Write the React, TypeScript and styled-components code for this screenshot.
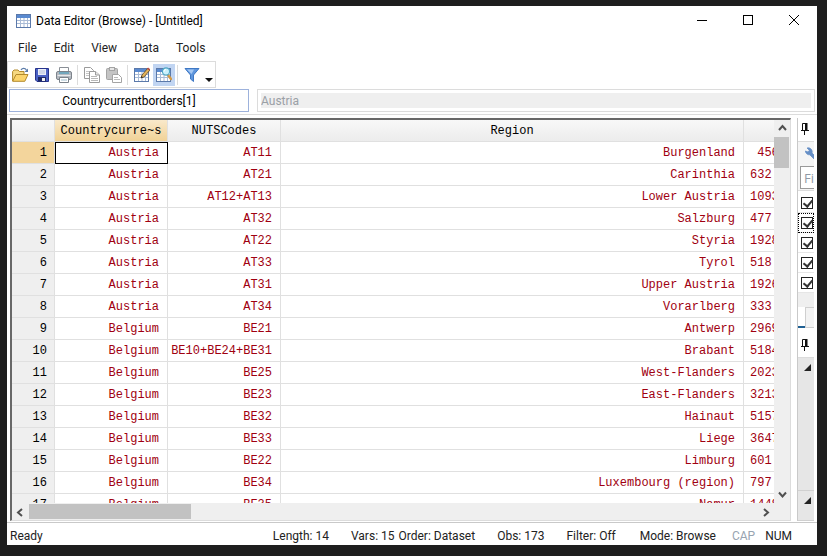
import React from 'react';
import styled, { createGlobalStyle } from 'styled-components';

const UI = 'Roboto, "Open Sans", sans-serif';
const MONO = '"Liberation Mono", monospace';

const GlobalStyle = createGlobalStyle`
  * { box-sizing: border-box; }
  body { margin: 0; background: #1e1e1e; font-family: ${UI}; font-size: 12px; color: #222; }
  button { font: inherit; color: inherit; border: 0; background: none; padding: 0; margin: 0; }
  svg { display: block; }
`;

const Desktop = styled.div`
  display: flex;
  height: 100vh;
  min-height: 400px;
  padding: 6px 10px 11px 7px;
`;
const Window = styled.main`
  display: flex;
  flex-direction: column;
  flex: 1;
  min-width: 0;
  background: #fff;
`;

const TitleBar = styled.header`
  display: flex;
  align-items: center;
  height: 30px;
  padding-left: 9px;
  color: #000;
`;
const Title = styled.h1`
  flex: 1;
  margin: 0 0 0 5px;
  font-size: 12px;
  line-height: 16px;
  font-weight: 400;
`;
const CaptionButton = styled.button`
  display: grid;
  place-items: center;
  align-self: flex-start;
  width: 46px;
  height: 28px;
`;

const MenuBar = styled.nav`
  display: flex;
  height: 25px;
  padding-left: 11px;
  gap: 17px;
`;
const MenuButton = styled.button`
  line-height: 25px;
`;

const ToolBar = styled.div`
  display: flex;
  align-items: center;
  align-self: flex-start;
  height: 27px;
  width: 209px;
  padding-left: 1px;
  border: 1px solid #dcdcdc;
  flex: none;
`;
const ToolButton = styled.button<{ $active?: boolean }>`
  display: grid;
  place-items: center;
  width: 22px;
  height: 22px;
  flex: none;
  background: ${p => (p.$active ? '#c1d5f2' : 'transparent')};
`;
const DropButton = styled.button`
  display: flex;
  align-items: flex-end;
  margin-left: 2px;
  width: 10px;
  height: 14px;
`;
const Separator = styled.span`
  width: 1px;
  height: 20px;
  margin: 0 3px 0 2px;
  background: #dcdcdc;
`;

const CellBar = styled.div`
  display: flex;
  gap: 8px;
  height: 27px;
  flex: none;
  padding: 1px 2px 2px;
  border-bottom: 1px solid #dcdcdc;
`;
const CellName = styled.output`
  width: 240px;
  border: 1px solid #9db2dc;
  color: #000;
  text-align: center;
  line-height: 22px;
`;
const CellValue = styled.input`
  flex: 1;
  min-width: 0;
  border: 1px solid #dcdcdc;
  outline: 3px solid #fff;
  outline-offset: -4px;
  background: #efefef;
  padding: 0 3px;
  font: inherit;
  color: #9aa0a6;
`;

const Body = styled.div`
  display: flex;
  flex: 1;
  min-height: 0;
  padding: 3px 3px 1px;
  border-bottom: 1px solid #c9c9c9;
  gap: 6px;
`;
const GridFrame = styled.section`
  display: grid;
  grid-template-columns: minmax(0, 1fr) 16px;
  grid-template-rows: minmax(0, 1fr) 17px;
  flex: 1;
  min-width: 0;
  border-style: solid;
  border-width: 2px 1px 1px 2px;
  border-color: #686868 #dcdcdc #dcdcdc #686868;
  background: #efefef;
`;
const Viewport = styled.div`
  overflow: hidden;
  background: #fff;
`;
const Table = styled.table`
  width: calc(100% + 50px);
  table-layout: fixed;
  border-collapse: separate;
  border-spacing: 0;
  font-family: ${MONO};
  font-size: 12px;
  line-height: 20px;
`;
const Col = styled.col<{ $w?: number }>`
  width: ${p => (p.$w ? `${p.$w}px` : 'auto')};
`;
const HeadCell = styled.th<{ $active?: boolean }>`
  height: 22px;
  padding: 1px 0 0;
  font-weight: 400;
  color: #000;
  text-align: center;
  white-space: nowrap;
  border-right: 1px solid #e0e0e0;
  border-bottom: 1px solid #e0e0e0;
  background: ${p => (p.$active ? 'linear-gradient(#f9e9cb, #f1d296)' : 'linear-gradient(#f8f8f8, #ececec)')};
`;
const RowHead = styled.th<{ $active?: boolean }>`
  height: 22px;
  padding: 1px 7px 0 0;
  font-weight: 400;
  color: #000;
  text-align: right;
  border-right: 1px solid #e0e0e0;
  border-bottom: 1px solid #e0e0e0;
  background: ${p => (p.$active ? '#f3d59c' : '#efefef')};
`;
const Cell = styled.td<{ $selected?: boolean; $left?: boolean }>`
  height: 22px;
  padding: ${p => (p.$left ? '1px 0 0 6px' : '1px 8px 0 0')};
  text-align: ${p => (p.$left ? 'left' : 'right')};
  white-space: pre;
  color: #a00010;
  border-right: 1px solid #e0e0e0;
  border-bottom: 1px solid #e0e0e0;
  outline: ${p => (p.$selected ? '1px solid #000' : 'none')};
  outline-offset: -1px;
`;

const ScrollV = styled.div`
  display: flex;
  flex-direction: column;
  min-height: 0;
`;
const ScrollH = styled.div`
  display: flex;
  padding-top: 1px;
`;
const ScrollButton = styled.button`
  display: grid;
  place-items: center;
  width: 17px;
  height: 17px;
  flex: none;
`;
const Thumb = styled.div<{ $w: number; $h: number }>`
  width: ${p => p.$w}px;
  height: ${p => p.$h}px;
  background: #c2c2c2;
`;
const Spacer = styled.div`
  flex: 1;
`;

const Side = styled.aside`
  display: flex;
  flex-direction: column;
  width: 17px;
  flex: none;
  overflow: hidden;
  border-left: 1px solid #c9c9c9;
  background: #fff;
`;
const PinBar = styled.div`
  display: flex;
  align-items: flex-start;
  flex: none;
  height: 24px;
  padding: 5px 0 0 3px;
  border-bottom: 1px solid #dcdcdc;
`;
const PinBarTall = styled(PinBar)`
  height: 30px;
  padding-top: 11px;
`;
const SearchBar = styled.div`
  display: flex;
  flex: none;
  flex-direction: column;
  gap: 5px;
  height: 49px;
  padding: 5px 0 0 2px;
  background: #f5f5f5;
  border-bottom: 1px solid #dcdcdc;
`;
const WrenchButton = styled.button`
  padding-left: 4px;
  width: 18px;
`;
const FilterInput = styled.input`
  width: 100px;
  height: 23px;
  padding: 0 3px;
  border: 1px solid #9a9a9a;
  font-family: "Open Sans", sans-serif;
  font-size: 13px;
  &::placeholder { color: #8f99a5; opacity: 1; }
`;
const VarRow = styled.label<{ $focus?: boolean }>`
  display: flex;
  align-items: center;
  flex: none;
  height: 20px;
  padding-left: 3px;
  border-bottom: 1px solid #e6e6e6;
  outline: ${p => (p.$focus ? '1px dotted #000' : 'none')};
  outline-offset: -1px;
`;
const VarList = styled.div`
  padding-top: 2px;
  flex: none;
`;
const Check = styled.input`
  appearance: none;
  width: 12px;
  height: 12px;
  margin: 0;
  flex: none;
  border: 1px solid #222;
  background: #fff;
  position: relative;
  &:checked::after {
    content: '';
    position: absolute;
    left: 3px;
    top: 0;
    width: 4px;
    height: 7px;
    border: solid #333;
    border-width: 0 2px 2px 0;
    transform: rotate(40deg);
  }
`;
const ListFoot = styled.div`
  height: 14px;
  flex: none;
  background: #efefef;
`;
const Tabs = styled.div`
  display: flex;
  height: 21px;
  flex: none;
`;
const Tab = styled.button<{ $active?: boolean }>`
  width: ${p => (p.$active ? 7 : 30)}px;
  flex: none;
  border-style: solid;
  border-color: ${p => (p.$active ? '#1f6093' : '#cfcfcf')};
  border-width: ${p => (p.$active ? '0 0 2px' : '1px')};
  background: ${p => (p.$active ? '#fff' : '#f3f3f3')};
`;
const PropList = styled.div`
  display: flex;
  flex: 1;
  flex-direction: column;
  justify-content: space-between;
  min-height: 0;
  padding: 6px 0 0 6px;
  background: #e6e6e6;
`;
const PropFoot = styled.div`
  height: 31px;
  padding: 6px 0 0 6px;
  margin-left: -6px;
  border-top: 1px solid #d0d0d0;
  border-bottom: 1px solid #d0d0d0;
`;

const StatusBar = styled.footer`
  display: flex;
  flex: none;
  height: 22px;
  padding: 2px 25px 0 3px;
  line-height: 22px;
  white-space: nowrap;
`;
const Status = styled.span<{ $gap?: number; $dim?: boolean }>`
  margin-left: ${p => p.$gap ?? 0}px;
  color: ${p => (p.$dim ? '#98a4b0' : '#222')};
`;

const SheetBase = ({ y = 1 }: { y?: number }) => (
  <g>
    <rect x="0.5" y={y + 0.5} width="14" height="13" fill="#fff" stroke="#5b79aa" />
    <rect x="1" y={y + 1} width="13" height="3" fill="#5a8ad0" />
    <path d={`M1 ${y + 6.5}h13M1 ${y + 9.5}h13M4.5 ${y + 4}v9M8 ${y + 4}v9M11.5 ${y + 4}v9`} stroke="#a9bbd6" />
  </g>
);
const SheetIcon = () => (
  <svg width="15" height="15" viewBox="0 0 15 15"><SheetBase y={0} /></svg>
);
const EditIcon = () => (
  <svg width="16" height="16" viewBox="0 0 16 16">
    <SheetBase />
    <path d="M7 11l1-3 6-7 2 2-6 7z" fill="#e3b45a" stroke="#5b4322" strokeWidth=".8" />
    <path d="M13 2l1-1.5 2 1.5-1 1.5z" fill="#c0504a" />
    <path d="M7 11l.6-2 1.4 1.3z" fill="#222" />
  </svg>
);
const BrowseIcon = () => (
  <svg width="16" height="16" viewBox="0 0 16 16">
    <SheetBase />
    <path d="M12 8l3 4" stroke="#d49a46" strokeWidth="2.4" strokeLinecap="round" />
    <circle cx="10" cy="4.500" r="3.600" fill="#c9f0fb" stroke="#51a9c6" strokeWidth="1.2" />
    <path d="M8 4.500a2 2 0 012-2" stroke="#fff" strokeWidth="1.2" fill="none" />
  </svg>
);
const OpenIcon = () => (
  <svg width="17" height="16" viewBox="0 0 17 16">
    <path d="M.6 14V4.5L2 3h4l1.3 1.5H12V8" fill="#f6d982" stroke="#b38a2c" />
    <path d="M.7 14.3L4 7.5h12l-3.2 6.8z" fill="#fbd46c" stroke="#b38a2c" />
    <path d="M9 2.8C10.5.8 13 .8 14.4 3" fill="none" stroke="#5d7da9" strokeWidth="1.3" />
    <path d="M16 1.5V5h-3.6z" fill="#5d7da9" />
  </svg>
);
const SaveIcon = () => (
  <svg width="14" height="14" viewBox="0 0 14 14">
    <path d="M.5.5h13v13H2L.5 12z" fill="#4a61c4" stroke="#27338c" />
    <rect x="3" y="1" width="8" height="6" fill="#e9edf7" />
    <path d="M4 3h6M4 5h6" stroke="#b7c0dc" />
    <rect x="3" y="9" width="8" height="4.5" fill="#1f2a66" />
    <rect x="7" y="10" width="3" height="3" fill="#f2f2f2" />
  </svg>
);
const PrintIcon = () => (
  <svg width="16" height="16" viewBox="0 0 16 16">
    <path d="M3.5 5V.5h9V5" fill="#fff" stroke="#8a8f96" />
    <rect x=".5" y="4.5" width="15" height="8" rx="1.5" fill="#b5bac1" stroke="#7d838b" />
    <rect x="3" y="5" width="10" height="2" fill="#71a7bd" />
    <path d="M1.5 8.5h13" stroke="#e8eaec" />
    <path d="M3.5 10.5h9v5h-9z" fill="#fff" stroke="#7b828a" />
    <path d="M5 13h6" stroke="#9dbccc" />
  </svg>
);
const CopyIcon = () => (
  <svg width="16" height="16" viewBox="0 0 16 16" stroke="#9b9b9b">
    <path d="M.5.5h6l3 3v8h-9z" fill="#fff" />
    <path d="M2 4.5h5M2 6.5h5M2 8.5h5" stroke="#c6c6c6" />
    <path d="M5.5 4.5h6l4 3.5v7.5h-10z" fill="#fff" />
    <path d="M11.5 4.5V8h4" fill="#e6e6e6" />
    <path d="M7 9.5h6M7 11.5h7M7 13.5h7" stroke="#b8b8b8" />
  </svg>
);
const PasteIcon = () => (
  <svg width="16" height="16" viewBox="0 0 16 16" stroke="#a4a4a4">
    <rect x=".5" y="1.5" width="11" height="11" rx="1" fill="#c4c4c4" />
    <rect x="3.5" y=".5" width="5" height="3" fill="#e6e6e6" />
    <path d="M6.500 7.500h6l3 3v5h-9z" fill="#fff" />
    <path d="M8 10.500h4M8 12.500h6" stroke="#bcbcbc" />
  </svg>
);
const FunnelIcon = () => (
  <svg width="16" height="16" viewBox="0 0 16 16">
    <path d="M1 1.500h14L9.500 8v6.500L6.500 12V8z" fill="#5f96dd" stroke="#3f78c4" strokeLinejoin="round" />
    <path d="M3 2.500h7L7.500 7z" fill="#a5c8f3" />
  </svg>
);
const PinIcon = () => (
  <svg width="8" height="12" viewBox="0 0 8 12">
    <path d="M1.500 7V.5h4V7M0 7.500h8M3.500 8v4" fill="none" stroke="#111" />
    <path d="M4 0h2.500v7H4z" fill="#111" />
  </svg>
);
const WrenchIcon = () => (
  <svg width="14" height="14" viewBox="0 0 14 14">
    <path d="M3 1l2.300 2.300L4 5 1.400 4A4 4 0 005.800 7.800L11 13l2-2-5-5A4 4 0 003 1z" fill="#668fc6" stroke="#668fc6" strokeWidth=".8" />
  </svg>
);
const Corner = () => (
  <svg width="7" height="7" viewBox="0 0 7 7"><path d="M7 0v7H0z" fill="#222" /></svg>
);
const arrows = { up: 'M1 6l3.500-4L8 6', down: 'M1 2.500l3.500 4 3.500-4', left: 'M6 1L2 4.500 6 8', right: 'M3 1l4 3.500L3 8' };
const Arrow = ({ dir }: { dir: keyof typeof arrows }) => (
  <svg width="9" height="9" viewBox="0 0 9 9"><path d={arrows[dir]} fill="none" stroke="#505050" strokeWidth="2" /></svg>
);

const rows: [string, string, string, string][] = [
  ['Austria', 'AT11', 'Burgenland', ' 456'],
  ['Austria', 'AT21', 'Carinthia', '632'],
  ['Austria', 'AT12+AT13', 'Lower Austria', '1093'],
  ['Austria', 'AT32', 'Salzburg', '477'],
  ['Austria', 'AT22', 'Styria', '1928'],
  ['Austria', 'AT33', 'Tyrol', '518'],
  ['Austria', 'AT31', 'Upper Austria', '1926'],
  ['Austria', 'AT34', 'Vorarlberg', '333'],
  ['Belgium', 'BE21', 'Antwerp', '2969'],
  ['Belgium', 'BE10+BE24+BE31', 'Brabant', '5184'],
  ['Belgium', 'BE25', 'West-Flanders', '2023'],
  ['Belgium', 'BE23', 'East-Flanders', '3213'],
  ['Belgium', 'BE32', 'Hainaut', '5157'],
  ['Belgium', 'BE33', 'Liege', '3647'],
  ['Belgium', 'BE22', 'Limburg', '601'],
  ['Belgium', 'BE34', 'Luxembourg (region)', '797'],
  ['Belgium', 'BE35', 'Namur', '1448'],
];

export default function App() {
  return (
    <Desktop>
      <GlobalStyle />
      <Window>
        <TitleBar>
          <SheetIcon />
          <Title>Data Editor (Browse) - [Untitled]</Title>
          <CaptionButton aria-label="Minimize">
            <svg width="10" height="10"><path d="M0 5.500h10" stroke="#000" /></svg>
          </CaptionButton>
          <CaptionButton aria-label="Maximize">
            <svg width="10" height="10"><rect x=".5" y=".5" width="9" height="9" fill="none" stroke="#000" /></svg>
          </CaptionButton>
          <CaptionButton aria-label="Close">
            <svg width="10" height="10"><path d="M0 0l10 10M10 0L0 10" stroke="#000" /></svg>
          </CaptionButton>
        </TitleBar>
        <MenuBar>
          {['File', 'Edit', 'View', 'Data', 'Tools'].map(m => <MenuButton key={m}>{m}</MenuButton>)}
        </MenuBar>
        <ToolBar>
          <ToolButton aria-label="Open"><OpenIcon /></ToolButton>
          <ToolButton aria-label="Save"><SaveIcon /></ToolButton>
          <ToolButton aria-label="Print"><PrintIcon /></ToolButton>
          <Separator />
          <ToolButton aria-label="Copy"><CopyIcon /></ToolButton>
          <ToolButton aria-label="Paste"><PasteIcon /></ToolButton>
          <Separator />
          <ToolButton aria-label="Edit mode"><EditIcon /></ToolButton>
          <ToolButton aria-label="Browse mode" $active><BrowseIcon /></ToolButton>
          <Separator />
          <ToolButton aria-label="Filter"><FunnelIcon /></ToolButton>
          <DropButton aria-label="More tools">
            <svg width="8" height="4"><path d="M0 0h8L4 4z" fill="#111" /></svg>
          </DropButton>
        </ToolBar>
        <CellBar>
          <CellName>Countrycurrentborders[1]</CellName>
          <CellValue aria-label="Cell value" defaultValue="Austria" readOnly />
        </CellBar>
        <Body>
          <GridFrame>
            <Viewport>
              <Table>
                <colgroup><Col $w={43} /><Col $w={113} /><Col $w={113} /><Col /><Col $w={80} /></colgroup>
                <thead>
                  <tr>
                    <HeadCell />
                    <HeadCell $active>Countrycurre~s</HeadCell>
                    <HeadCell>NUTSCodes</HeadCell>
                    <HeadCell>Region</HeadCell>
                    <HeadCell />
                  </tr>
                </thead>
                <tbody>
                  {rows.map(([country, code, region, value], i) => (
                    <tr key={code}>
                      <RowHead $active={i === 0}>{i + 1}</RowHead>
                      <Cell $selected={i === 0}>{country}</Cell>
                      <Cell>{code}</Cell>
                      <Cell>{region}</Cell>
                      <Cell $left>{value}</Cell>
                    </tr>
                  ))}
                </tbody>
              </Table>
            </Viewport>
            <ScrollV>
              <ScrollButton aria-label="Scroll up"><Arrow dir="up" /></ScrollButton>
              <Thumb $w={15} $h={31} />
              <Spacer />
              <ScrollButton aria-label="Scroll down"><Arrow dir="down" /></ScrollButton>
            </ScrollV>
            <ScrollH>
              <ScrollButton aria-label="Scroll left"><Arrow dir="left" /></ScrollButton>
              <Thumb $w={162} $h={15} />
              <Spacer />
              <ScrollButton aria-label="Scroll right"><Arrow dir="right" /></ScrollButton>
            </ScrollH>
          </GridFrame>
          <Side>
            <PinBar><button aria-label="Pin variables"><PinIcon /></button></PinBar>
            <SearchBar>
              <WrenchButton aria-label="Options"><WrenchIcon /></WrenchButton>
              <FilterInput aria-label="Filter variables" placeholder="Filter variables here" />
            </SearchBar>
            <VarList>
              {[0, 1, 2, 3, 4].map(i => (
                <VarRow key={i} $focus={i === 1}><Check type="checkbox" defaultChecked aria-label={`Variable ${i + 1}`} /></VarRow>
              ))}
            </VarList>
            <ListFoot />
            <Tabs><Tab $active aria-label="Variables" /><Tab aria-label="Snapshots" /></Tabs>
            <PinBarTall><button aria-label="Pin properties"><PinIcon /></button></PinBarTall>
            <PropList><Corner /><PropFoot><Corner /></PropFoot></PropList>
          </Side>
        </Body>
        <StatusBar>
          <Status>Ready</Status>
          <Spacer />
          <Status>Length: 14</Status>
          <Status $gap={22}>Vars: 15</Status>
          <Status $gap={4}>Order: Dataset</Status>
          <Status $gap={22}>Obs: 173</Status>
          <Status $gap={22}>Filter: Off</Status>
          <Status $gap={24}>Mode: Browse</Status>
          <Status $gap={16} $dim>CAP</Status>
          <Status $gap={10}>NUM</Status>
        </StatusBar>
      </Window>
    </Desktop>
  );
}
